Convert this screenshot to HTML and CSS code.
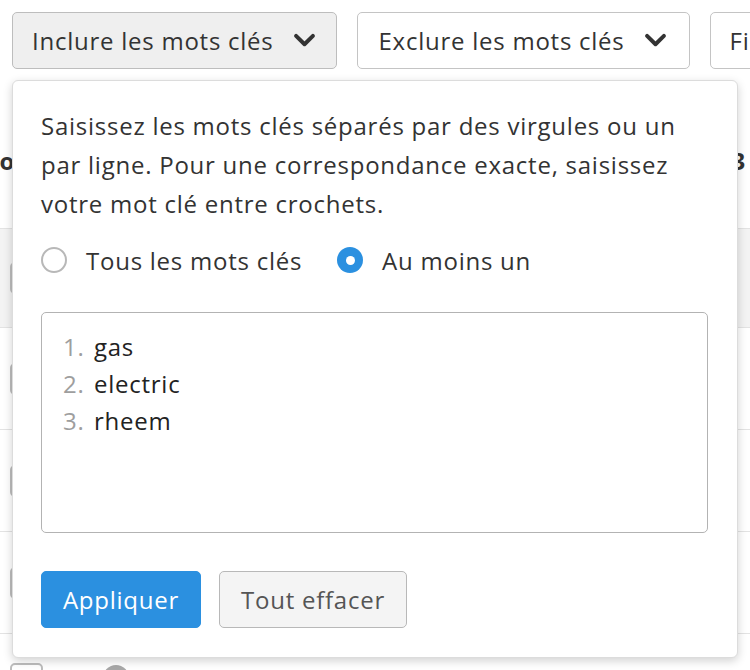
FILE: index.html
```html
<!DOCTYPE html>
<html lang="fr">
<head>
<meta charset="utf-8">
<title>Inclure les mots clés</title>
<link rel="stylesheet" href="styles.css">
</head>
<body>
<div class="page">
  <div class="toolbar">
    <button class="filter active">Inclure les mots clés
      <svg class="chev" viewBox="0 0 24 16" width="23" height="15"><path d="M3 3 L12 12 L21 3" fill="none" stroke="#333" stroke-width="4.2" stroke-linecap="round" stroke-linejoin="round"/></svg>
    </button>
    <button class="filter wide">Exclure les mots clés
      <svg class="chev" viewBox="0 0 24 16" width="23" height="15"><path d="M3 3 L12 12 L21 3" fill="none" stroke="#333" stroke-width="4.2" stroke-linecap="round" stroke-linejoin="round"/></svg>
    </button>
    <button class="filter">Filtres avancés</button>
  </div>

  <div class="table">
    <div class="thead"><span class="th-left">Mo</span><span class="th-right">3</span></div>
    <div class="row band"><span class="cb"></span></div>
    <div class="row"><span class="cb"></span></div>
    <div class="row"><span class="cb"></span></div>
    <div class="row"><span class="cb"></span></div>
    <div class="row last"><span class="cb"></span><span class="avatar"></span></div>
  </div>

  <div class="popup">
    <p class="hint">Saisissez les mots clés séparés par des virgules ou un<br>par ligne. Pour une correspondance exacte, saisissez<br>votre mot clé entre crochets.</p>
    <div class="radios">
      <label class="radio"><span class="dot"></span>Tous les mots clés</label>
      <label class="radio checked"><span class="dot"></span>Au moins un</label>
    </div>
    <div class="textarea">
      <div class="kw"><span class="num">1.</span>gas</div>
      <div class="kw"><span class="num">2.</span>electric</div>
      <div class="kw"><span class="num">3.</span>rheem</div>
    </div>
    <div class="actions">
      <button class="btn primary">Appliquer</button>
      <button class="btn secondary">Tout effacer</button>
    </div>
  </div>
</div>
</body>
</html>
```

FILE: styles.css
```css
* { box-sizing: border-box; }
html, body { margin: 0; padding: 0; background: #fff; }
body {
  font-family: "Open Sans", "Noto Sans", sans-serif;
  font-size: 24px;
  letter-spacing: 0.75px;
  color: #333;
  width: 750px;
  height: 670px;
  overflow: hidden;
}
.page { position: relative; width: 750px; height: 670px; overflow: hidden; }

.toolbar {
  display: flex;
  gap: 20px;
  padding: 12px 0 0 12px;
  white-space: nowrap;
}
.filter {
  display: flex;
  align-items: center;
  gap: 19px;
  height: 57px;
  padding: 0 20px 0 19px;
  border: 1px solid #c4c4c4;
  border-radius: 5px;
  background: #fff;
  font-family: inherit;
  font-size: 24px;
  letter-spacing: 0.75px;
  color: #333;
  flex-shrink: 0;
}
.filter.wide { padding: 0 22px 0 21px; }
.filter.active { background: #efefef; border-color: #bdbdbd; }
.chev { display: block; }

.table { margin-top: 24px; }
.thead {
  height: 135px;
  display: flex;
  justify-content: space-between;
  align-items: center;
  font-size: 24px;
  font-weight: 700;
  color: #333;
}
.th-left { margin-left: -24px; }
.th-right { margin-right: 4px; }
.row {
  height: 102px;
  border-top: 1px solid #e3e3e3;
  display: flex;
  align-items: center;
  padding-left: 10px;
}
.row.band { background: #f3f3f3; height: 99px; }
.row.last { align-items: flex-start; padding-top: 29px; }
.cb {
  width: 33px;
  height: 32px;
  border: 2px solid #bdbdbd;
  border-radius: 5px;
  background: #fff;
}
.avatar {
  width: 26px;
  height: 26px;
  border-radius: 50%;
  background: #a8a8a8;
  margin-left: 60px;
  margin-top: 2px;
}

.popup {
  position: absolute;
  left: 12px;
  top: 80px;
  width: 726px;
  height: 578px;
  background: #fff;
  border: 1px solid #dcdcdc;
  border-radius: 6px;
  box-shadow: 0 3px 10px rgba(0, 0, 0, 0.18);
  padding: 25px 29px 0 28px;
}
.hint {
  margin: 0;
  font-size: 24px;
  line-height: 39px;
  white-space: nowrap;
  color: #333;
}
.radios {
  display: flex;
  align-items: center;
  gap: 35px;
  margin-top: 12px;
  height: 50px;
}
.radio {
  display: flex;
  align-items: center;
  gap: 19px;
  font-size: 24px;
  color: #333;
}
.dot {
  width: 26px;
  height: 26px;
  border-radius: 50%;
  border: 2px solid #b8b8b8;
  background: #fff;
  display: inline-block;
  position: relative;
  flex-shrink: 0;
}
.radio.checked .dot {
  border: none;
  background: #2b90e0;
}
.radio.checked .dot::after {
  content: "";
  position: absolute;
  left: 8.5px;
  top: 8.5px;
  width: 9px;
  height: 9px;
  border-radius: 50%;
  background: #fff;
}

.textarea {
  margin-top: 27px;
  height: 221px;
  width: 667px;
  border: 1.5px solid #b3b3b3;
  border-radius: 5px;
  padding: 15px 0 0 21px;
}
.kw {
  font-size: 24px;
  line-height: 37px;
  color: #222;
}
.num {
  display: inline-block;
  width: 31px;
  color: #9e9e9e;
}

.actions {
  display: flex;
  gap: 18px;
  margin-top: 38px;
}
.btn {
  height: 57px;
  border-radius: 5px;
  font-family: inherit;
  font-size: 24px;
  letter-spacing: 0.75px;
  padding: 0;
}
.btn.primary {
  background: #2b90e0;
  border: 1px solid #2b90e0;
  color: #fff;
  width: 160px;
}
.btn.secondary {
  background: #f4f4f4;
  border: 1px solid #b8b8b8;
  color: #555;
  width: 188px;
}
```
